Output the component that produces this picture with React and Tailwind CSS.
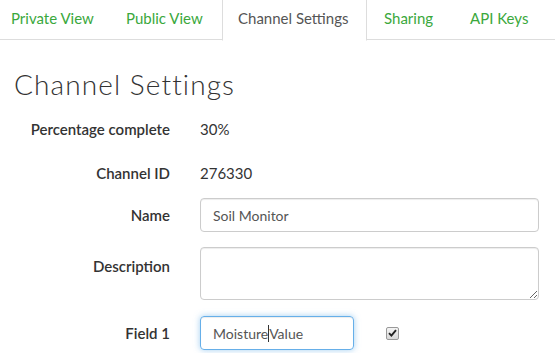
import React from "react";

const TABS = [
  { label: "Private View", w: "w-[113px]", ml: "ml-[-4px]" },
  { label: "Public View", w: "w-[109px]", ml: "ml-[2px]" },
  { label: "Channel Settings", w: "w-[145px]", ml: "ml-[2px]", active: true },
  { label: "Sharing", w: "w-[84px]", ml: "ml-[2px]" },
  { label: "API Keys", w: "w-[90px]", ml: "ml-[2px]" },
];

function Label({ children, className = "" }) {
  return (
    <div className={`w-[170px] shrink-0 text-right font-semibold text-[15px] text-[#333] ${className}`}>
      {children}
    </div>
  );
}

export default function App() {
  return (
    <div className="w-[555px] h-[353px] overflow-hidden bg-white font-['Lato','Liberation_Sans',sans-serif]">
      {/* Tabs */}
      <div className="flex h-[40px] border-b border-[#ddd]">
        {TABS.map((t) => (
          <div
            key={t.label}
            className={`${t.w} ${t.ml} shrink-0 h-[40px] pl-[15px] pb-[4px] flex items-center text-[15px] ${
              t.active
                ? "bg-white text-[#555] border-x border-[#ddd] border-b border-b-white -mb-px h-[41px] pl-[14px]"
                : "text-[#3aa83c]"
            }`}
          >
            {t.label}
          </div>
        ))}
      </div>

      <h1 className="mt-[28px] ml-[14px] text-[28px] leading-[32px] font-light tracking-[1.1px] text-[#333]">
        Channel Settings
      </h1>

      <div className="mt-[12px]">
        <div className="flex items-center h-[34px]">
          <Label>Percentage complete</Label>
          <div className="ml-[30px] text-[15px] text-[#333]">30%</div>
        </div>

        <div className="flex items-center h-[34px] mt-[10px]">
          <Label>Channel ID</Label>
          <div className="ml-[30px] text-[15px] text-[#333]">276330</div>
        </div>

        <div className="flex items-center h-[34px] mt-[8px]">
          <Label>Name</Label>
          <div className="ml-[30px] w-[339px] h-[34px] rounded-[4px] border border-[#ccc] px-[12px] flex items-center text-[14px] text-[#555] shadow-[inset_0_1px_1px_rgba(0,0,0,0.075)]">
            Soil Monitor
          </div>
        </div>

        <div className="flex items-start mt-[15px]">
          <Label className="pt-[9px] leading-[20px]">Description</Label>
          <textarea
            readOnly
            className="ml-[30px] w-[339px] h-[53px] rounded-[4px] border border-[#ccc] px-[12px] py-[6px] text-[14px] text-[#555] outline-none shadow-[inset_0_1px_1px_rgba(0,0,0,0.075)]"
          />
        </div>

        <div className="flex items-center h-[34px] mt-[16px]">
          <Label>Field 1</Label>
          <div className="ml-[30px] w-[154px] h-[34px] rounded-[4px] border border-[#66afe9] px-[12px] flex items-center text-[14px] text-[#555] shadow-[inset_0_1px_1px_rgba(0,0,0,0.075),0_0_6px_rgba(102,175,233,0.6)]">
            Moisture
            <span className="inline-block w-px h-[17px] bg-[#333]" />
            Value
          </div>
          <div className="ml-[32px] w-[13px] h-[13px] rounded-[2px] border border-[#999] bg-gradient-to-b from-[#f4f4f4] to-[#d8d8d8] flex items-center justify-center">
            <svg width="9" height="8" viewBox="0 0 9 8">
              <path d="M1 4.2 L3.4 6.6 L8 1.2" fill="none" stroke="#222" strokeWidth="1.9" />
            </svg>
          </div>
        </div>
      </div>
    </div>
  );
}
